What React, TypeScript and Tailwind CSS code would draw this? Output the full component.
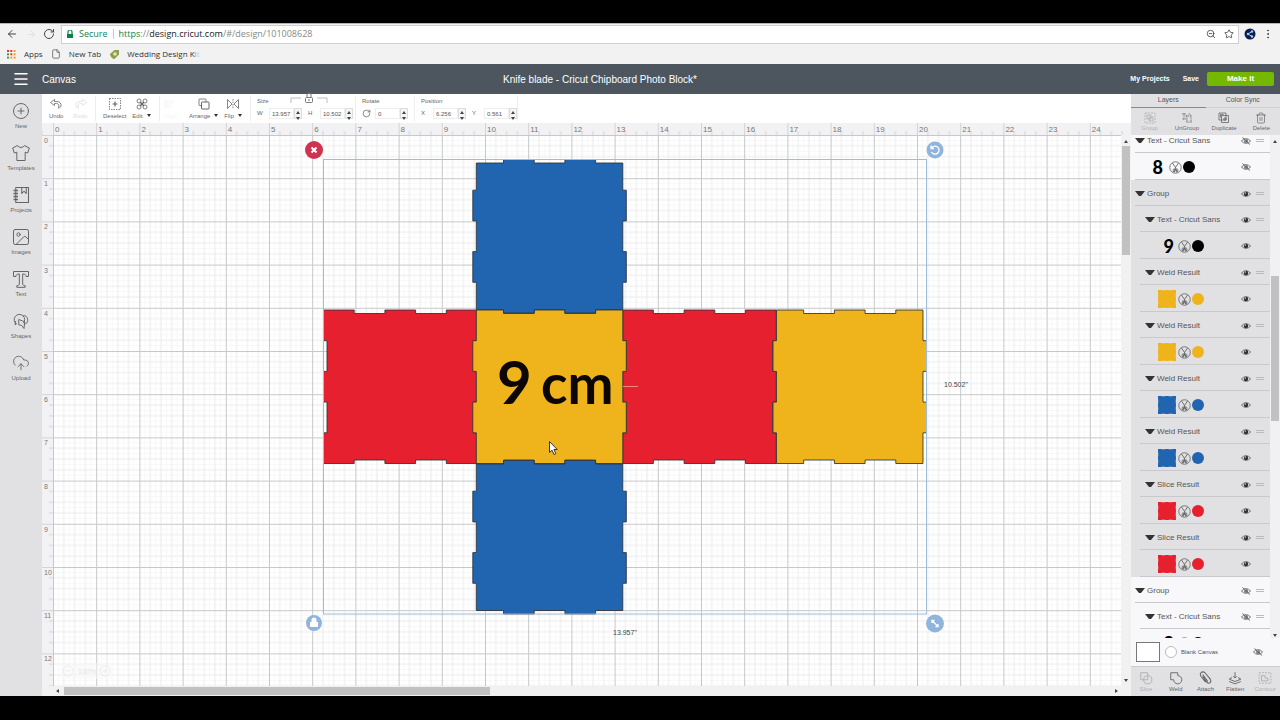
import { useState } from 'react';
import type { ReactNode } from 'react';
import {
  ArrowLeft,
  ArrowRight,
  CirclePlus,
  CloudUpload,
  EllipsisVertical,
  File,
  Image,
  Menu,
  RotateCw,
  Star,
  Trash2,
  ZoomOut,
} from 'lucide-react';
import clsx from 'clsx';

const INCH = 43.2;
const BLUE = '#2165b0';
const RED = '#e7202f';
const YELLOW = '#efb31c';

/* ---------- small drawings ---------- */

function Draw({ size = 12, className, children }: { size?: number; className?: string; children: ReactNode }) {
  return (
    <svg
      width={size}
      height={size}
      viewBox="0 0 24 24"
      fill="none"
      stroke="currentColor"
      strokeWidth={1.6}
      strokeLinejoin="round"
      className={clsx('shrink-0', className)}
      aria-hidden="true"
    >
      {children}
    </svg>
  );
}

const UndoIcon = ({ flip = false }: { flip?: boolean }) => (
  <Draw className={flip ? '-scale-x-100' : ''}>
    <path d="M9 3 1 9l8 6v-4c6-1 9 1 9 5 0 2-1 3-2 4 4 0 7-3 6-7-1-5-6-7-13-6z" />
  </Draw>
);

const DeselectIcon = () => (
  <Draw>
    <rect x="1" y="1" width="22" height="22" strokeDasharray="3 2" />
    <path d="M12 7v10M7 12h10" strokeWidth={2.4} />
  </Draw>
);

const EditIcon = () => (
  <Draw>
    <circle cx="6" cy="6" r="4" />
    <circle cx="18" cy="6" r="4" />
    <circle cx="6" cy="18" r="4" />
    <circle cx="18" cy="18" r="4" />
    <path d="m8 8 8 8m0-8-8 8" strokeWidth={3} />
  </Draw>
);

const AlignIcon = () => (
  <Draw>
    <path d="M3 2v20M6 6h12v4H6zM6 14h8v4H6z" />
  </Draw>
);

const ArrangeIcon = () => (
  <Draw>
    <rect x="2" y="2" width="14" height="13" rx="1" />
    <rect x="7" y="8" width="15" height="14" rx="1" fill="#fff" strokeWidth={2} />
  </Draw>
);

const FlipIcon = () => (
  <Draw>
    <path d="M1 3v18l9-9zM23 3v18l-9-9z" />
    <path d="M12 2v20" strokeDasharray="3 2" />
  </Draw>
);

const ShirtIcon = () => (
  <Draw size={20}>
    <path d="M8 3 2 6l2 6 3-1v10h10V11l3 1 2-6-6-3c-1 3-7 3-8 0z" strokeWidth={1.2} />
  </Draw>
);

const ProjectsIcon = () => (
  <Draw size={18}>
    <path d="M5 2h17v20H5zM13 2v8l3-3 3 3V2" strokeWidth={1.4} />
    <path d="M2 6h6M2 10h6M2 14h6M2 18h6" strokeWidth={1.8} />
  </Draw>
);

const TextIcon = () => (
  <Draw size={20}>
    <path d="M3 3h18v6h-3c0-2-1-3-4-3v12c0 1 1 2 3 2v2H7v-2c2 0 3-1 3-2V6C7 6 6 7 6 9H3z" strokeWidth={1.2} />
  </Draw>
);

const ShapesIcon = () => (
  <Draw size={18}>
    <path d="M15 15a7 7 0 1 0-9 1l-2 1 1-5M15 5c3-1 6 2 6 6 0 3-2 5-5 5" strokeWidth={1.3} />
    <path d="m9 10 8 3-1 9-3-4-4-1z" strokeWidth={1.3} />
  </Draw>
);

const GroupIcon = () => (
  <Draw>
    <rect x="2" y="2" width="20" height="20" strokeDasharray="4 2" />
    <rect x="6" y="6" width="8" height="8" />
    <rect x="10" y="10" width="8" height="8" />
  </Draw>
);

const UnGroupIcon = () => (
  <Draw>
    <path d="M2 4h8M6 2v14M3 14h9M9 8h11M12 6v14M20 6v14M10 20h12M15 4h5" strokeDasharray="3 1.5" />
  </Draw>
);

const DuplicateIcon = () => (
  <Draw>
    <rect x="2" y="2" width="14" height="14" />
    <rect x="7" y="7" width="14" height="14" />
    <path d="M14 10v8M10 14h8M5 5h6M5 5v6" />
  </Draw>
);

const WeldIcon = () => (
  <Draw size={14}>
    <path d="M3 3h12v5c4 0 7 3 7 7s-3 7-7 7-7-3-7-7H3z" />
  </Draw>
);

const SliceIcon = () => (
  <Draw size={14}>
    <rect x="3" y="3" width="12" height="12" />
    <circle cx="15" cy="15" r="7" />
  </Draw>
);

const AttachIcon = () => (
  <Draw size={14}>
    <path d="m8 9 7 10c1 2 4 3 6 1s1-4 0-6L12 3C10 1 7 1 5 3S4 7 5 9l8 10M8 6l9 12" strokeWidth={1.8} />
  </Draw>
);

const FlattenIcon = () => (
  <Draw size={14}>
    <path d="M12 2v10m-3-3 3 3 3-3M7 11l-5 3 10 4 10-4-5-3M2 18l10 4 10-4" />
  </Draw>
);

const ContourIcon = () => (
  <Draw size={14}>
    <rect x="2" y="3" width="20" height="18" strokeDasharray="3 2" />
    <path d="M6 8h6v4h5v5H6z" />
  </Draw>
);

function Eye({ hidden = false }: { hidden?: boolean }) {
  return (
    <svg width="10" height="8" viewBox="0 0 20 16" className="block shrink-0" aria-hidden="true">
      <path d="M1 8c4-6 14-6 18 0-4 6-14 6-18 0z" fill="none" stroke="#666" strokeWidth="1.8" />
      <circle cx="10" cy="8" r="4.5" fill={hidden ? '#888' : '#333'} />
      <circle cx="8.500" cy="6" r="1.4" fill="#eee" />
      {hidden && <path d="M3 1l15 14" stroke="#555" strokeWidth="1.8" />}
    </svg>
  );
}

const CutIcon = () => (
  <svg width="13" height="13" viewBox="0 0 26 26" fill="none" stroke="#555" aria-hidden="true">
    <circle cx="13" cy="13" r="11.500" strokeWidth="1.5" />
    <path d="M7 4l6 9 3 8M19 4l-6 9-3 8" strokeWidth="1.6" />
    <path d="M10 15c-2 2-2 5-1 7h2l2-6 2 6h2c1-2 1-5-1-7" strokeWidth="1.6" />
  </svg>
);

const Caret = () => (
  <svg width="10" height="6" viewBox="0 0 10 6" className="shrink-0" aria-hidden="true">
    <path d="M0 0h10L6 5H4z" fill="#333" />
  </svg>
);

function ScrollArrow({ dir }: { dir: 'up' | 'down' | 'left' | 'right' }) {
  const d = { up: 'M1 5h4L3 2z', down: 'M1 2h4L3 5z', left: 'M4 1v4L1 3z', right: 'M2 1v4l3-2z' }[dir];
  return (
    <svg width="6" height="6" viewBox="0 0 6 6" className="shrink-0" aria-hidden="true">
      <path d={d} fill="#444" />
    </svg>
  );
}

/* ---------- browser chrome ---------- */

function BrowserBar() {
  return (
    <div className="shrink-0 border-t border-[#b5b5b5] bg-[#f2f2f2] font-['Open_Sans','Noto_Sans',sans-serif]">
      <div className="flex h-5 items-center">
        <button aria-label="Back" className="ml-1.5 text-[#444]"><ArrowLeft size={12} /></button>
        <button aria-label="Forward" className="ml-2 text-[#ddd]"><ArrowRight size={11} /></button>
        <button aria-label="Reload" className="ml-1.5 text-[#444]"><RotateCw size={12} /></button>
        <div className="ml-1.5 flex h-[19px] flex-1 items-center border border-[#cfcfcf] bg-white pl-1 text-[9px]">
          <svg width="8" height="9" viewBox="0 0 8 9" aria-hidden="true">
            <path d="M1 4h6v4H1z" fill="#0b8043" />
            <path d="M2 4V2a2 2 0 0 1 4 0v2" fill="none" stroke="#0b8043" strokeWidth="1.2" />
          </svg>
          <span className="ml-[5px] text-[#188148]">Secure</span>
          <span className="ml-[5px] h-2.5 w-px bg-[#ccc]" />
          <span className="ml-[5px] flex-1 text-[#888]">
            <span className="text-[#188148]">https</span>://<span className="text-[#222]">design.cricut.com</span>/#/design/101008628
          </span>
          <ZoomOut size={10} className="mr-2 text-[#444]" />
          <Star size={10} className="mr-1 text-[#444]" />
        </div>
        <svg width="12" height="12" viewBox="0 0 12 12" className="ml-[5px]" aria-hidden="true">
          <circle cx="6" cy="6" r="5.500" fill="#0b1d4d" />
          <path d="M8 3.500 4 6l4 2.500" fill="none" stroke="#9fd0f5" />
          <circle cx="8" cy="3.500" r="1.2" fill="#9fd0f5" />
          <circle cx="4" cy="6" r="1.2" fill="#9fd0f5" />
          <circle cx="8" cy="8.500" r="1.2" fill="#9fd0f5" />
        </svg>
        <button aria-label="Browser menu" className="mx-1.5 text-[#444]"><EllipsisVertical size={12} /></button>
      </div>
      <nav className="flex h-5 items-center text-[8px] text-[#333]">
        <a href="#apps" className="ml-[7px] flex items-center">
          <svg width="9" height="9" viewBox="0 0 9 9" className="mr-2" aria-hidden="true">
            {['#e53935', '#e53935', '#f0a020', '#43a047', '#e53935', '#f0a020', '#43a047', '#f0a020', '#f0a020'].map((c, i) => (
              <rect key={i} x={(i % 3) * 3.3} y={Math.floor(i / 3) * 3.3} width="2" height="2" fill={c} />
            ))}
          </svg>
          Apps
        </a>
        <a href="#new" className="ml-2 flex items-center"><File size={10} className="mr-2 text-[#666]" />New Tab</a>
        <a href="#kit" className="ml-2 flex items-center">
          <svg width="11" height="11" viewBox="0 0 22 22" className="mr-[7px]" aria-hidden="true">
            <path d="M2 10 11 2h9v9l-9 9c-3 1-9-5-9-10z" fill="#8fa04c" />
            <circle cx="12" cy="10" r="3.500" fill="#e3e8c8" />
          </svg>
          <span>Wedding Design K<span className="text-[#999]">i</span><span className="text-[#ccc]">t</span></span>
        </a>
      </nav>
    </div>
  );
}

function AppHeader() {
  return (
    <header className="flex h-[30px] shrink-0 items-center bg-[#4d565f] text-white">
      <div className="flex flex-1 items-center">
        <button aria-label="Menu" className="ml-3"><Menu size={18} strokeWidth={2} /></button>
        <span className="ml-3 text-[10px]">Canvas</span>
      </div>
      <h1 className="pr-20 text-[10px]">Knife blade - Cricut Chipboard Photo Block*</h1>
      <div className="flex flex-1 items-center justify-end text-[7px] font-bold">
        <a href="#projects">My Projects</a>
        <button className="ml-[13px]">Save</button>
        <button className="mr-1.5 ml-2 h-3.5 w-[67px] rounded-[2px] bg-[#74b800] text-[8px] font-bold">Make It</button>
      </div>
    </header>
  );
}

/* ---------- toolbar ---------- */

interface ToolProps {
  label: string;
  icon: ReactNode;
  menu?: boolean;
  faded?: boolean;
  className?: string;
}

function Tool({ label, icon, menu, faded, className }: ToolProps) {
  return (
    <button
      disabled={faded}
      className={clsx('flex flex-col items-center text-[6px]', faded ? 'text-[#ddd]' : 'text-[#666]', className)}
    >
      {icon}
      <span className="flex h-2 items-center gap-1 leading-[8px] whitespace-nowrap">
        {label}
        {menu && <svg width="4" height="3" viewBox="0 0 4 3" aria-hidden="true"><path d="M0 0h4L2 3z" fill="#333" /></svg>}
      </span>
    </button>
  );
}

function NumberBox({ label, icon, value }: { label: string; icon?: ReactNode; value: string }) {
  const [v, setV] = useState(value);
  return (
    <label className="flex items-center text-[6px] text-[#666]">
      <span className={icon ? 'w-[15px]' : 'w-3'}>{icon ?? label}</span>
      <input
        aria-label={label}
        value={v}
        onChange={(e) => setV(e.target.value)}
        className="h-[11px] w-[25px] border border-[#eee] bg-white pl-0.5 text-[6px] text-[#555] outline-none"
      />
      <span className="flex h-[11px] w-2 flex-col items-center justify-between border border-[#ddd] bg-[#f5f5f5]">
        <ScrollArrow dir="up" />
        <ScrollArrow dir="down" />
      </span>
    </label>
  );
}

function Toolbar() {
  return (
    <div className="flex h-[29px] items-stretch bg-white py-0.5">
      <div className="flex w-[54px] items-center gap-2.5 border-r border-[#eee] pl-[7px]">
        <Tool label="Undo" icon={<UndoIcon />} className="gap-0.5" />
        <Tool label="Redo" icon={<UndoIcon flip />} faded className="gap-0.5" />
      </div>
      <div className="flex w-16 items-center gap-1.5 border-r border-[#eee] pl-[7px]">
        <Tool label="Deselect" icon={<DeselectIcon />} className="gap-0.5" />
        <Tool label="Edit" icon={<EditIcon />} menu className="gap-0.5" />
      </div>
      <div className="flex w-[91px] items-center justify-end gap-1.5 border-r border-[#eee] pr-2">
        <Tool label="Align" icon={<AlignIcon />} faded className="mr-1.5 gap-0.5 opacity-30" />
        <Tool label="Arrange" icon={<ArrangeIcon />} menu className="gap-0.5" />
        <Tool label="Flip" icon={<FlipIcon />} menu className="gap-0.5" />
      </div>
      <div className="relative flex w-[105px] flex-col justify-between border-r border-[#eee] px-1.5 pb-0.5 text-[6px] text-[#666]">
        <span className="leading-[10px]">Size</span>
        <div className="flex gap-1.5">
          <NumberBox label="W" value="13.957" />
          <NumberBox label="H" value="10.502" />
        </div>
        <svg width="38" height="12" viewBox="0 0 38 12" className="absolute -top-1 left-[39px]" fill="none" stroke="#777" aria-hidden="true">
          <path d="M1 11V6h10M27 6h10v5" stroke="#bbb" />
          <rect x="15.500" y="5.500" width="7" height="5" rx="1" />
          <path d="M17 5V3a2 2 0 0 1 4 0v2M19 7v2" />
        </svg>
      </div>
      <div className="flex w-[59px] flex-col justify-between border-r border-[#eee] px-1.5 pb-0.5 text-[6px] text-[#666]">
        <span className="leading-[10px]">Rotate</span>
        <NumberBox label="Rotate" icon={<RotateCw size={9} />} value="0" />
      </div>
      <div className="flex w-[103px] flex-col justify-between border-r border-[#eee] px-1.5 pb-0.5 text-[6px] text-[#666]">
        <span className="leading-[10px]">Position</span>
        <div className="flex gap-1.5">
          <NumberBox label="X" value="6.256" />
          <NumberBox label="Y" value="0.561" />
        </div>
      </div>
    </div>
  );
}

/* ---------- sidebar ---------- */

const sideItems = [
  { label: 'New', icon: <CirclePlus size={18} strokeWidth={1.3} /> },
  { label: 'Templates', icon: <ShirtIcon /> },
  { label: 'Projects', icon: <ProjectsIcon /> },
  { label: 'Images', icon: <Image size={20} strokeWidth={1.2} /> },
  { label: 'Text', icon: <TextIcon /> },
  { label: 'Shapes', icon: <ShapesIcon /> },
  { label: 'Upload', icon: <CloudUpload size={18} strokeWidth={1.2} /> },
];

function Sidebar() {
  return (
    <nav className="flex w-[42px] shrink-0 flex-col bg-[#e1e1e4] pt-1.5 text-[#666]">
      {sideItems.map((s) => (
        <button key={s.label} className="flex h-[42px] flex-col items-center text-[6px]">
          <span className="flex h-[22px] items-center">{s.icon}</span>
          <span className="leading-[9px]">{s.label}</span>
        </button>
      ))}
    </nav>
  );
}

/* ---------- canvas ---------- */

type Edge = 'out' | 'in';
const FACE = 153.5;
const DEPTH = 3.5;

/** Outline of one box face with two finger joints per edge. */
function facePath(x: number, y: number, [top, right, bottom, left]: Edge[]) {
  const t = FACE / 5;
  const base = (e: Edge) => (e === 'out' ? DEPTH : 0);
  const tooth = (e: Edge) => (e === 'out' ? 0 : DEPTH);
  const pts: [number, number][] = [];
  const steps = [t, 2 * t, 3 * t, 4 * t];
  const depthAt = (e: Edge, i: number) => (i % 2 ? [tooth(e), base(e)] : [base(e), tooth(e)]);

  pts.push([base(left), base(top)]);
  steps.forEach((s, i) => depthAt(top, i).forEach((d) => pts.push([s, d])));
  pts.push([FACE - base(right), base(top)]);
  steps.forEach((s, i) => depthAt(right, i).forEach((d) => pts.push([FACE - d, s])));
  pts.push([FACE - base(right), FACE - base(bottom)]);
  steps.forEach((s, i) => depthAt(bottom, i).forEach((d) => pts.push([FACE - s, FACE - d])));
  pts.push([base(left), FACE - base(bottom)]);
  steps.forEach((s, i) => depthAt(left, i).forEach((d) => pts.push([d, FACE - s])));
  return 'M' + pts.map(([px, py]) => `${(x + px).toFixed(1)} ${(y + py).toFixed(1)}`).join('L') + 'Z';
}

const faces: { x: number; y: number; fill: string; edges: Edge[] }[] = [
  { x: 270.5, y: 175, fill: RED, edges: ['in', 'in', 'in', 'in'] },
  { x: 569.7, y: 175, fill: RED, edges: ['in', 'in', 'in', 'in'] },
  { x: 419.8, y: 175, fill: YELLOW, edges: ['in', 'out', 'in', 'out'] },
  { x: 720, y: 175, fill: YELLOW, edges: ['in', 'out', 'in', 'out'] },
  { x: 419.8, y: 24.5, fill: BLUE, edges: ['out', 'out', 'out', 'out'] },
  { x: 419.8, y: 325.5, fill: BLUE, edges: ['out', 'out', 'out', 'out'] },
];

function Artboard() {
  return (
    <svg className="block h-full w-full bg-white" role="img" aria-label="Design canvas">
      <defs>
        <pattern id="grid" width={INCH} height={INCH} patternUnits="userSpaceOnUse">
          <path d="M5.4 0v43.2M16.200 0v43.2M27 0v43.2M37.800 0v43.2M0 5.4h43.2M0 16.200h43.2M0 27h43.2M0 37.800h43.2" stroke="#f8f8f8" />
          <path d="M10.8 0v43.2M21.600 0v43.2M32.400 0v43.2M0 10.8h43.2M0 21.600h43.2M0 32.400h43.2" stroke="#ececee" />
          <path d="M.5 0v43.2M0 .5h43.2" stroke="#c6c7ca" />
        </pattern>
      </defs>
      <rect width="100%" height="100%" fill="url(#grid)" />

      {faces.map((f, i) => (
        <path key={i} d={facePath(f.x, f.y, f.edges)} fill={f.fill} stroke="#2d3138" strokeOpacity={0.85} />
      ))}
      <path d="M570 251.500h15" stroke="#f08a80" />

      <g fontFamily="Lato, sans-serif" fontWeight="700" fill="#0c0704">
        <text x="444" y="269" fontSize="60">9</text>
        <text x="488" y="269" fontSize="55">cm</text>
      </g>

      {/* selection box and its handles */}
      <rect x="270.500" y="24.500" width="603" height="454.500" fill="none" stroke="#9fbcd8" />
      <circle cx="261" cy="15" r="9" fill="#cf3350" />
      <path d="m258.500 12.500 5 5m0-5-5 5" stroke="#fff" strokeWidth="2" />
      <g fill="#8fb4de">
        <circle cx="882" cy="15" r="8.500" />
        <circle cx="261" cy="488" r="8" />
        <circle cx="882" cy="488.500" r="9" />
      </g>
      <g fill="none" stroke="#fff" strokeWidth="1.3">
        <path d="M879 12.500a4 4 0 1 1-.5 4.500M878 10.500v3h3" />
        <path d="m879.500 486 5 5M879 488v-2.500h2.500M885 489v2.500h-2.500" />
      </g>
      <path d="M257 487h8v5h-8zM258.500 487v-2a2.500 2.500 0 0 1 5 0v2z" fill="#fff" />

      <g fontFamily="Liberation Sans, Arial, sans-serif" fontSize="7" fill="#444">
        <text x="891" y="252">10.502"</text>
        <text x="560" y="500">13.957"</text>
      </g>

      <g opacity="0.5" fill="none" stroke="#e2e2e2">
        <rect x="7" y="528" width="53" height="16" rx="3" fill="#f8f8f8" stroke="none" />
        <circle cx="15" cy="536" r="5" />
        <circle cx="52" cy="536" r="5" />
        <path d="M13 536h4M50 536h4M52 534v4" />
        <text x="25" y="539" fontFamily="Liberation Sans, Arial, sans-serif" fontSize="7" fill="#ccc" stroke="none">100%</text>
      </g>

      {/* mouse pointer */}
      <path d="M496.500 306.500v11l2.500-2.300 2 4.300 1.800-.8-1.900-4.200h3.300z" fill="#fff" stroke="#222" strokeWidth=".9" />
    </svg>
  );
}

// the visible mat is 24 x 12 inches
const range = (n: number) => Array.from({ length: n }, (_, i) => i);

function TopRuler() {
  return (
    <svg className="block h-3 w-full bg-[#f2f2f4]" aria-hidden="true">
      <defs>
        <pattern id="ticks-x" x="11" width={INCH} height="12" patternUnits="userSpaceOnUse">
          <path d="M.5 0v12M10.8 8v4M21.600 8v4M32.400 8v4" stroke="#d3d3d6" />
        </pattern>
      </defs>
      <rect width="100%" height="100%" fill="url(#ticks-x)" />
      <g fontFamily="Liberation Sans, Arial, sans-serif" fontSize="8" fill="#777">
        {range(25).map((n) => (
          <text key={n} x={13 + n * INCH} y="9">{n}</text>
        ))}
      </g>
    </svg>
  );
}

function LeftRuler() {
  return (
    <svg className="block h-full w-[11px] shrink-0 bg-[#f2f2f4]" aria-hidden="true">
      <defs>
        <pattern id="ticks-y" width="11" height={INCH} patternUnits="userSpaceOnUse">
          <path d="M0 .5h11M7 10.8h4M7 21.600h4M7 32.400h4" stroke="#d3d3d6" />
        </pattern>
      </defs>
      <rect width="100%" height="100%" fill="url(#ticks-y)" />
      <g fontFamily="Liberation Sans, Arial, sans-serif" fontSize="7" fill="#777">
        {range(13).map((n) => (
          <text key={n} x="2" y={8 + n * INCH}>{n}</text>
        ))}
      </g>
    </svg>
  );
}

function Workspace() {
  return (
    <main className="flex min-w-0 flex-1 flex-col">
      <Toolbar />
      <TopRuler />
      <div className="flex min-h-0 flex-1">
        <LeftRuler />
        <div className="min-w-0 flex-1"><Artboard /></div>
        <div className="flex w-[10px] flex-col items-center bg-[#f1f1f1] py-[3px]">
          <ScrollArrow dir="up" />
          <div className="mt-0.5 h-1/5 w-2 bg-[#c1c1c1]" />
          <span className="flex-1" />
          <ScrollArrow dir="down" />
        </div>
      </div>
      <div className="flex h-[10px] items-center bg-[#f1f1f1] pr-3 pl-[13px]">
        <ScrollArrow dir="left" />
        <div className="ml-[3px] h-2 w-2/5 bg-[#c1c1c1]" />
        <span className="flex-1" />
        <ScrollArrow dir="right" />
      </div>
    </main>
  );
}

/* ---------- layers panel ---------- */

interface Layer {
  name: string;
  fill: string;
  glyph?: string;
}

function LayerHeader({ name, nested, hidden }: { name: string; nested?: boolean; hidden?: boolean }) {
  return (
    <div className={clsx('h-[26px] shrink-0', nested ? 'pl-[9px]' : 'pl-1')}>
      <div className={clsx('flex h-full items-center border-b border-[#c9c9cb] pt-0.5 pr-1.5', nested && 'pl-[5px]')}>
        <Caret />
        <span className="ml-0.5 flex-1 text-[8px] text-[#555]">{name}</span>
        <button aria-label={`Toggle ${name}`}><Eye hidden={hidden} /></button>
        <span className="ml-[5px] h-[3px] w-2 border-y border-[#bbb]" />
      </div>
    </div>
  );
}

function LayerBody({ layer, nested, hidden }: { layer: Layer; nested?: boolean; hidden?: boolean }) {
  return (
    <div className={clsx('h-[27px] shrink-0', nested ? 'pl-[9px]' : 'pl-1')}>
      <div className="flex h-full items-center border-b border-[#c9c9cb] pt-0.5 pr-[19px]">
        <span className={clsx('flex items-center justify-end', nested ? 'w-9' : 'w-8')}>
          {layer.glyph ? (
            <span className={clsx("font-['Lato',sans-serif] text-lg leading-none font-black text-black", nested ? 'mr-0.5' : 'mr-1')}>
              {layer.glyph}
            </span>
          ) : (
            <svg width="18" height="18" viewBox="0 0 154 154" aria-hidden="true">
              <path d={facePath(0, 0, ['in', 'in', 'in', 'in'])} fill={layer.fill} stroke={layer.fill} strokeWidth="4" />
            </svg>
          )}
        </span>
        <span className="ml-0.5"><CutIcon /></span>
        <svg width="12" height="12" viewBox="0 0 12 12" className="ml-px" aria-hidden="true">
          <circle cx="6" cy="6" r="6" fill={layer.fill} />
        </svg>
        <span className="flex-1" />
        <button aria-label="Toggle layer"><Eye hidden={hidden} /></button>
      </div>
    </div>
  );
}

const groupLayers: Layer[] = [
  { name: 'Text - Cricut Sans', fill: '#000', glyph: '9' },
  { name: 'Weld Result', fill: YELLOW },
  { name: 'Weld Result', fill: YELLOW },
  { name: 'Weld Result', fill: BLUE },
  { name: 'Weld Result', fill: BLUE },
  { name: 'Slice Result', fill: RED },
  { name: 'Slice Result', fill: RED },
];

function LayersPanel() {
  return (
    <aside className="flex w-[149px] shrink-0 flex-col bg-[#f3f3f5]">
      <div className="flex h-3.5 bg-[#e1e1e4] text-[7px] text-[#555]">
        <button className="w-1/2 border-b border-[#888]">Layers</button>
        <button className="w-1/2 border-b border-[#d0d0d3]">Color Sync</button>
      </div>
      <div className="flex h-[27px] items-center bg-[#e1e1e4]">
        <Tool label="Group" icon={<GroupIcon />} className="w-1/4 opacity-40" />
        <Tool label="UnGroup" icon={<UnGroupIcon />} className="w-1/4" />
        <Tool label="Duplicate" icon={<DuplicateIcon />} className="w-1/4" />
        <Tool label="Delete" icon={<Trash2 size={12} strokeWidth={1.4} />} className="w-1/4" />
      </div>

      <div className="flex min-h-0 flex-1">
        <div className="flex min-w-0 flex-1 flex-col overflow-hidden">
          <div className="-mt-2 flex shrink-0 flex-col bg-[#f8f8fa]">
            <LayerHeader name="Text - Cricut Sans" hidden />
            <LayerBody layer={{ name: 'Text', fill: '#000', glyph: '8' }} hidden />
          </div>
          <div className="flex shrink-0 flex-col bg-[#e1e1e3]">
            <LayerHeader name="Group" />
            {groupLayers.map((l, i) => (
              <div key={i} className="flex flex-col">
                <LayerHeader name={l.name} nested />
                <LayerBody layer={l} nested />
              </div>
            ))}
          </div>
          <div className="flex shrink-0 flex-col bg-[#f8f8fa]">
            <LayerHeader name="Group" hidden />
            <LayerHeader name="Text - Cricut Sans" nested hidden />
            <LayerBody layer={{ name: 'Text', fill: '#000', glyph: '8' }} nested hidden />
          </div>
        </div>
        <div className="flex w-[10px] flex-col items-center bg-[#f1f1f3] pt-[3px]">
          <ScrollArrow dir="up" />
          <span className="flex-5" />
          <div className="h-[145px] w-2 bg-[#c1c1c1]" />
          <span className="flex-8" />
          <ScrollArrow dir="down" />
        </div>
      </div>

      <div className="flex h-7 shrink-0 items-center bg-[#f8f8fa] pl-[5px] text-[6px] text-[#555]">
        <span className="h-5 w-6 border border-[#777] bg-white" />
        <span className="ml-[5px] size-3 rounded-full border border-[#bbb] bg-white" />
        <span className="ml-1 flex-1">Blank Canvas</span>
        <button aria-label="Toggle blank canvas" className="mr-[17px]"><Eye hidden /></button>
      </div>
      <div className="flex h-[30px] shrink-0 items-center border-t border-[#ccc] bg-[#e1e1e4]">
        <Tool label="Slice" icon={<SliceIcon />} className="w-1/5 opacity-40" />
        <Tool label="Weld" icon={<WeldIcon />} className="w-1/5" />
        <Tool label="Attach" icon={<AttachIcon />} className="w-1/5" />
        <Tool label="Flatten" icon={<FlattenIcon />} className="w-1/5" />
        <Tool label="Contour" icon={<ContourIcon />} className="w-1/5 opacity-40" />
      </div>
    </aside>
  );
}

export default function App() {
  return (
    <div className="flex h-screen flex-col bg-black pt-[23px] pb-6 font-['Liberation_Sans',Arial,sans-serif]">
      <BrowserBar />
      <AppHeader />
      <div className="flex min-h-0 flex-1 bg-white">
        <Sidebar />
        <Workspace />
        <LayersPanel />
      </div>
    </div>
  );
}
